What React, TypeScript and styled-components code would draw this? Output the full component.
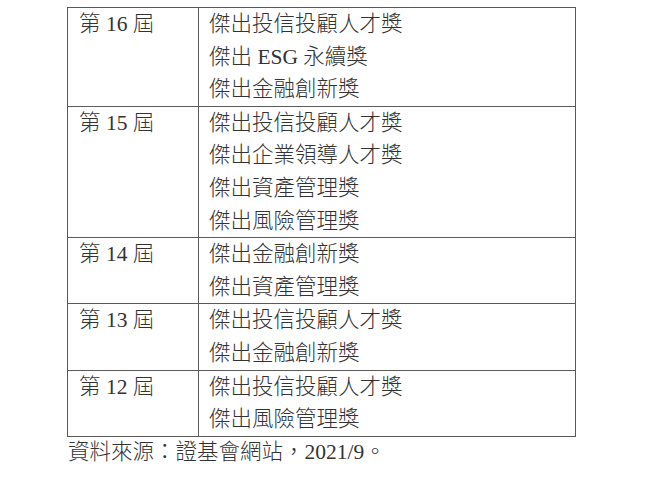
import React from "react";
import styled, { createGlobalStyle } from "styled-components";

const GlobalStyle = createGlobalStyle`
  body {
    margin: 0;
    background: #ffffff;
  }
`;

const Page = styled.div`
  padding: 7px 0 0 67px;
  font-family: "Liberation Serif", "Noto Sans CJK TC", serif;
  font-size: 21.5px;
  font-weight: 300;
  color: #333333;
`;

const Table = styled.table`
  border-collapse: collapse;
  table-layout: fixed;
  width: 509px;
`;

const Cell = styled.td<{ $narrow?: boolean }>`
  border: 1px solid #5a5a5a;
  vertical-align: top;
  padding: 0 0 0 ${(p) => (p.$narrow ? 11 : 10)}px;
  width: ${(p) => (p.$narrow ? "119px" : "auto")};
  line-height: 32.6px;
`;

const Line = styled.div`
  white-space: nowrap;
`;

const Caption = styled.div`
  padding-left: 1px;
  line-height: 30px;
`;

const rows = [
  { term: "第 16 屆", awards: ["傑出投信投顧人才獎", "傑出 ESG 永續獎", "傑出金融創新獎"] },
  {
    term: "第 15 屆",
    awards: ["傑出投信投顧人才獎", "傑出企業領導人才獎", "傑出資產管理獎", "傑出風險管理獎"],
  },
  { term: "第 14 屆", awards: ["傑出金融創新獎", "傑出資產管理獎"] },
  { term: "第 13 屆", awards: ["傑出投信投顧人才獎", "傑出金融創新獎"] },
  { term: "第 12 屆", awards: ["傑出投信投顧人才獎", "傑出風險管理獎"] },
];

export default function App() {
  return (
    <>
      <GlobalStyle />
      <Page>
        <Table>
          <tbody>
            {rows.map((r) => (
              <tr key={r.term}>
                <Cell $narrow>{r.term}</Cell>
                <Cell>
                  {r.awards.map((a) => (
                    <Line key={a}>{a}</Line>
                  ))}
                </Cell>
              </tr>
            ))}
          </tbody>
        </Table>
        <Caption>資料來源：證基會網站，2021/9。</Caption>
      </Page>
    </>
  );
}
